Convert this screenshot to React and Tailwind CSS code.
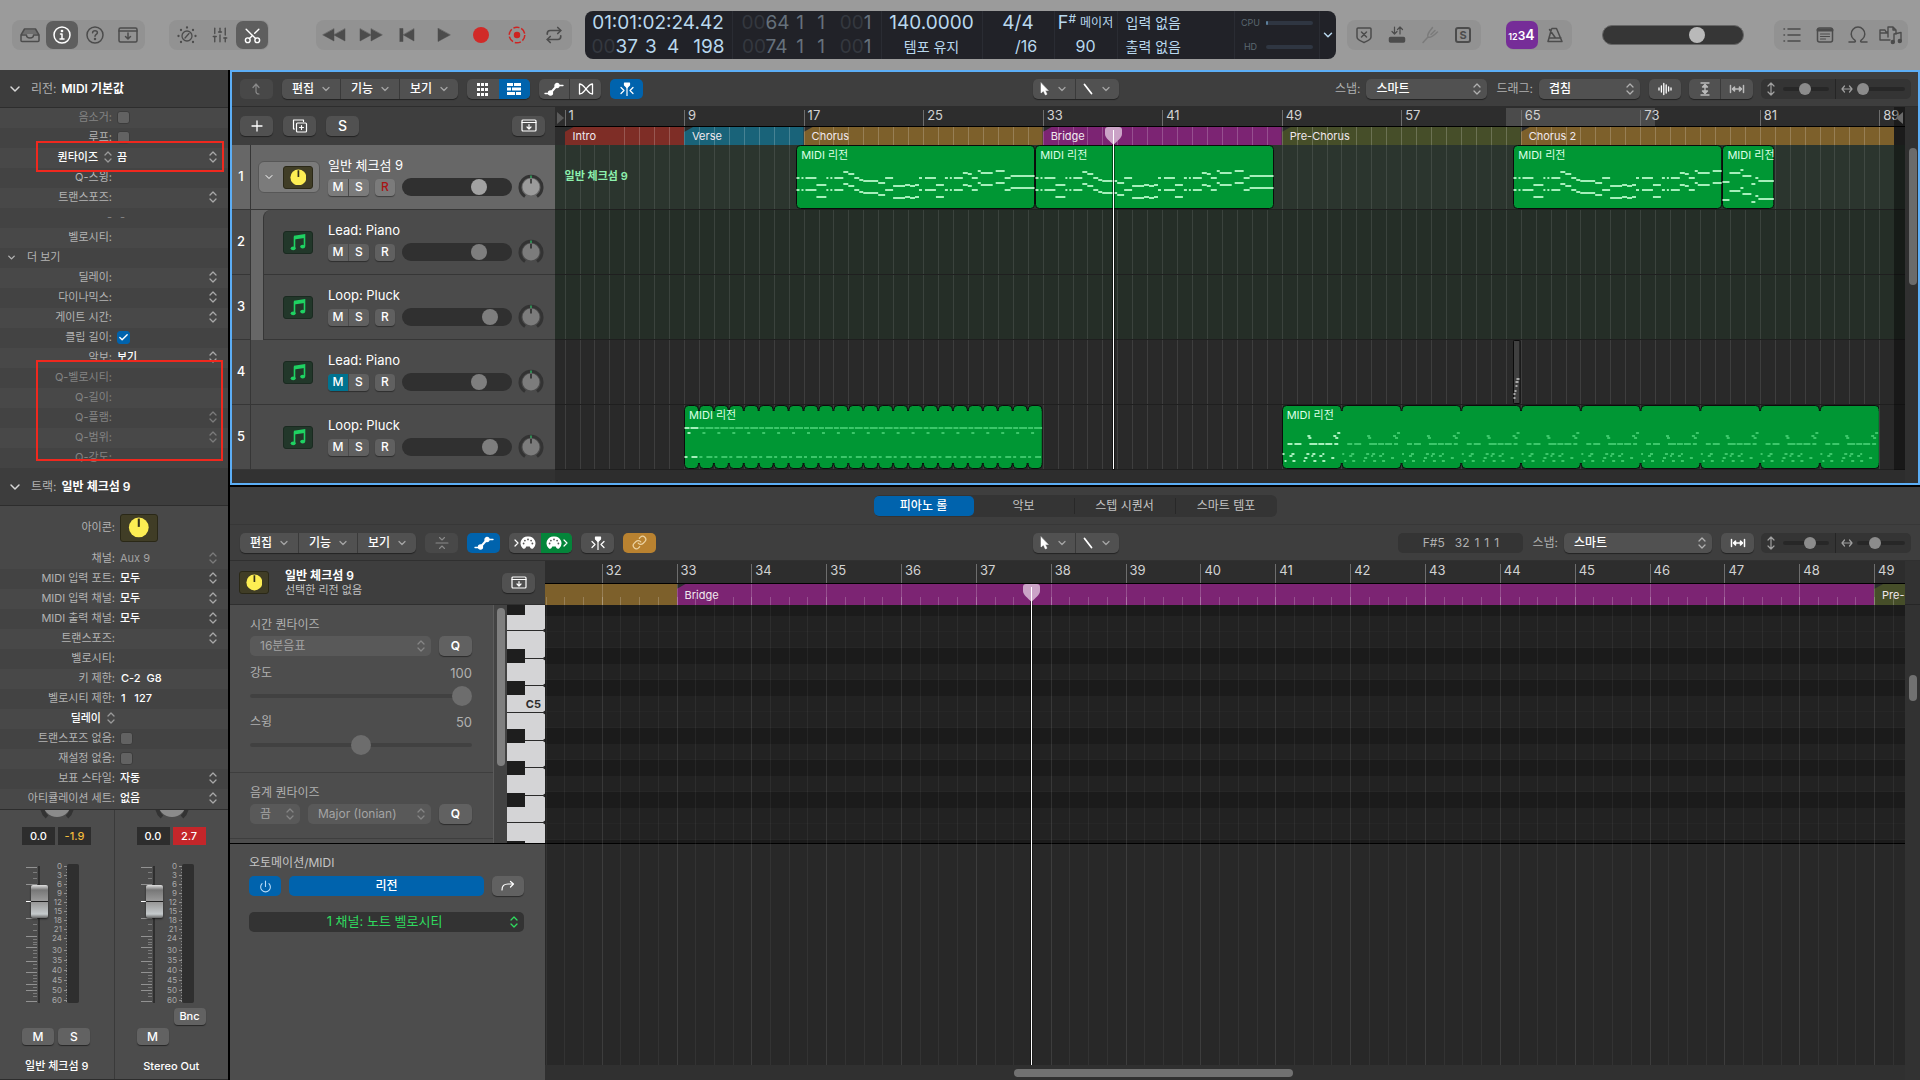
import { Check, ChevronDown, Link, Power, Repeat, Scissors, SlidersVertical } from "lucide-react";

const INSPECTOR_REGION = [
  { label: "음소거:", kind: "check", dim: true },
  { label: "루프:", kind: "check" },
  { label: "퀀타이즈", kind: "quantize", value: "끔" },
  { label: "Q-스윙:", kind: "text" },
  { label: "트랜스포즈:", kind: "select" },
  { label: "-", kind: "dash", dim: true },
  { label: "벨로시티:", kind: "text" },
  { label: "더 보기", kind: "toggle" },
  { label: "딜레이:", kind: "select" },
  { label: "다이나믹스:", kind: "select" },
  { label: "게이트 시간:", kind: "select" },
  { label: "클립 길이:", kind: "check", checked: true },
  { label: "악보:", kind: "select", value: "보기" },
  { label: "Q-벨로시티:", kind: "text", dim: true },
  { label: "Q-길이:", kind: "text", dim: true },
  { label: "Q-플램:", kind: "select", dim: true },
  { label: "Q-범위:", kind: "select", dim: true },
  { label: "Q-강도:", kind: "text", dim: true },
];

const INSPECTOR_TRACK = [
  { label: "채널:", kind: "select", value: "Aux 9", dimValue: true },
  { label: "MIDI 입력 포트:", kind: "select", value: "모두" },
  { label: "MIDI 입력 채널:", kind: "select", value: "모두" },
  { label: "MIDI 출력 채널:", kind: "select", value: "모두" },
  { label: "트랜스포즈:", kind: "select" },
  { label: "벨로시티:", kind: "text" },
  { label: "키 제한:", kind: "text", value: "C-2  G8" },
  { label: "벨로시티 제한:", kind: "text", value: "1   127" },
  { label: "딜레이", kind: "quantize" },
  { label: "트랜스포즈 없음:", kind: "check" },
  { label: "재설정 없음:", kind: "check" },
  { label: "보표 스타일:", kind: "select", value: "자동" },
  { label: "아티큘레이션 세트:", kind: "select", value: "없음" },
];

const TRACKS = [
  { id: 1, name: "일반 체크섬 9", volume: 73, selected: true },
  { id: 2, name: "Lead: Piano", volume: 73, nested: true },
  { id: 3, name: "Loop: Pluck", volume: 85, nested: true },
  { id: 4, name: "Lead: Piano", volume: 73, muted: true },
  { id: 5, name: "Loop: Pluck", volume: 85 },
];

const MARKERS = [
  { name: "Intro", from: 1, to: 9, color: "bg-[#7e2d26]" },
  { name: "Verse", from: 9, to: 17, color: "bg-[#196379]" },
  { name: "Chorus", from: 17, to: 33, color: "bg-[#7d602b]" },
  { name: "Bridge", from: 33, to: 49, color: "bg-[#7c2473]" },
  { name: "Pre-Chorus", from: 49, to: 65, color: "bg-[#464e29]" },
  { name: "Chorus 2", from: 65, to: 90, color: "bg-[#7d602b]" },
];

// notes are [start, end, y] in region units
const CHORUS = [
  [0, 3, 33], [5, 7, 33], [9, 20, 33], [20, 30, 40], [30, 32, 33], [34, 36, 33], [38, 47, 33],
  [47, 52, 27], [52, 58, 29], [58, 63, 33], [63, 67, 35], [67, 82, 36], [82, 89, 38], [89, 97, 33],
  [97, 109, 41], [109, 114, 40], [114, 119, 41], [119, 123, 40], [123, 126, 33], [129, 140, 33],
  [140, 148, 40], [149, 152, 33], [154, 156, 33], [158, 167, 33], [167, 172, 28], [172, 176, 29],
  [176, 182, 33], [182, 185, 26], [185, 197, 28], [200, 209, 26], [209, 215, 33], [215, 239, 31],
];
const TAIL = [
  [0, 7, 37], [7, 18, 28], [18, 21, 25], [20, 29, 31], [29, 33, 39], [33, 36, 33], [36, 53, 36],
];
const PLUCK = [[0, 5, 23], [6, 14, 23], [3, 6, 28], [0, 3, 52], [7, 13, 52]];
const ARP = [
  [5, 10, 39], [12, 19, 39], [27, 35, 39], [36, 42, 39], [43, 50, 39], [52, 56, 39],
  [25, 28, 31], [26, 29, 33], [51, 54, 31], [53, 56, 33], [55, 58, 28],
  [0, 2, 49], [9, 12, 49], [24, 27, 49], [30, 33, 49], [40, 42, 49],
  [7, 10, 51], [22, 25, 53], [29, 31, 51], [37, 40, 51], [49, 52, 53],
  [2, 4, 56], [10, 13, 56], [21, 23, 56], [31, 34, 56], [40, 43, 56],
];
const GRAY = [[3, 6, 39], [2, 5, 42], [2, 4, 46], [1, 3, 51], [0, 2, 54], [0, 2, 58]];

const double = (notes, gap) => notes.concat(notes.map(([a, b, y]) => [a, b, y + gap]));

const REGIONS = {
  1: [
    { from: 16.5, to: 32.5, notes: double(CHORUS, 12) },
    { from: 32.5, to: 48.5, notes: double(CHORUS, 12) },
    { from: 64.5, to: 78.5, notes: double(CHORUS, 12) },
    { from: 78.5, to: 82, notes: double(TAIL, 18) },
  ],
  4: [{ from: 64.5, to: 65, notes: GRAY, gray: true }],
  5: [
    { from: 9, to: 33, loop: 1, notes: PLUCK },
    { from: 49, to: 89, loop: 4, notes: ARP },
  ],
};

// horizontal scales: first visible bar and number of visible bars
const ARRANGE = { first: 0.36, span: 90.36 };
const ROLL = { first: 31.243, span: 18.17 };
const BAR = 15;
const PLAYHEAD = 37.74;

const at = (view, bar) => `${((bar - view.first) / view.span) * 100}%`;
const wide = (view, bars) => `${(bars / view.span) * 100}%`;
const range = (from, to, step = 1) => {
  const out = [];
  for (let n = from; n <= to; n += step) out.push(n);
  return out;
};

const BTN_BASE = "flex h-5 items-center justify-center rounded-[5px] text-white shadow-[0_1px_1px_rgba(0,0,0,0.45)]";
const BTN = `${BTN_BASE} bg-[#515151]`;
const BTN_LIGHT = `${BTN_BASE} bg-[#616161]`;
const THUMB = "appearance-none [&::-webkit-slider-thumb]:appearance-none [&::-webkit-slider-thumb]:rounded-full";

/* ---------- icons ---------- */

function Svg({ w = 20, h = 20, children, className = "", sw = 1.5 }) {
  return (
    <svg width={w} height={h} viewBox={`0 0 ${w} ${h}`} fill="none" stroke="currentColor" strokeWidth={sw} strokeLinecap="round" strokeLinejoin="round" className={`shrink-0 ${className}`} aria-hidden="true">
      {children}
    </svg>
  );
}

const TrayIcon = () => (
  <Svg><path d="M1 10 4.500 4h11L19 10v5.500a1 1 0 0 1-1 1H2a1 1 0 0 1-1-1ZM1 10h5.500c0 2 1.500 3 3.500 3s3.500-1 3.500-3H19" /><path d="M4.300 6h11.400M3.200 8h13.600" strokeWidth="1" /></Svg>
);
const InfoIcon = () => (
  <Svg><circle cx="10" cy="10" r="8" /><circle cx="10" cy="6" r="0.600" fill="currentColor" /><path d="M8.500 9H10v5M8 14h4" /></Svg>
);
const HelpIcon = () => (
  <Svg><circle cx="10" cy="10" r="8" /><path d="M7.600 7.800C7.700 6.400 8.700 5.700 10 5.700s2.400.8 2.400 2c0 1.700-2.400 1.700-2.400 3.500" /><circle cx="10" cy="14" r="0.500" fill="currentColor" /></Svg>
);
const DownBox = ({ small }) => (
  small
    ? <Svg w={16} h={14} sw={1.2}><rect x="1" y="1" width="14" height="11" rx="1" /><path d="M1 3.500h14M8 5.500v4M6 8l2 2 2-2" /></Svg>
    : <Svg><rect x="1" y="3" width="18" height="14" rx="1.500" /><path d="M1 6h18M10 8v6M7.500 11.500 10 14l2.500-2.500" /></Svg>
);
const DialIcon = () => (
  <Svg sw={1.3}>
    <circle cx="10" cy="11" r="5" /><path d="m8 13 4-4.500" />
    {[[10, 2.5], [4, 5], [16, 5], [1.5, 11], [18.5, 11], [4, 17], [16, 17]].map(([x, y]) => <circle key={`${x}-${y}`} cx={x} cy={y} r="0.500" fill="currentColor" />)}
  </Svg>
);
const UpDown = ({ className = "" }) => (
  <Svg w={8} h={12} sw={1.3} className={className}><path d="M1 4 4 1l3 3M1 8l3 3 3-3" /></Svg>
);
const CurveIcon = () => (
  <Svg w={20} h={14} sw={1.3}><path d="M1 11.500h5M13 3.500h6" /><path d="m6.500 11 6.500-7.500" strokeWidth="2" /><circle cx="6.500" cy="11" r="2" fill="currentColor" /><circle cx="13" cy="3.500" r="2" fill="currentColor" /></Svg>
);
const FlexIcon = () => (
  <Svg w={16} h={14} sw={1.3}><path d="M1.500 2v10c3 0 4-2 6.500-5s3.500-5 6.500-5v10c-3 0-4-2-6.500-5S4.500 2 1.500 2Z" /></Svg>
);
const CatchIcon = () => (
  <Svg w={18} h={14} sw={1.2}><path d="M9 4v10M3 5.500 6 8.500l-3 3M15 5.500l-3 3 3 3" /><path d="M6.500 1h5v2L9 5.500 6.500 3Z" fill="currentColor" /></Svg>
);
const PointerIcon = () => (
  <Svg w={10} h={14} sw={0.5}><path d="M2 1v10l2.500-2 1.800 4 1.700-.8L6.300 8.500H9Z" fill="currentColor" /></Svg>
);
const PencilIcon = () => <Svg w={10} h={12} sw={1.8}><path d="m1.500 1.500 7 9" /></Svg>;
const CopyPlus = () => (
  <Svg w={16} h={14} sw={1.2}><rect x="4.500" y="4" width="10" height="9" rx="1" /><path d="M2.500 10H1.500V1h10v1.500M9.500 6.500v4M7.500 8.500h4" /></Svg>
);
const WaveIcon = () => <Svg w={14} h={14} sw={1.3}><path d="M1 6v2M3.400 4v6M5.800 1.500v11M8.200 3v8M10.600 5v4M13 6v2" /></Svg>;
const FitV = () => (
  <Svg w={10} h={14} sw={1.4}><path d="M1 1h8M1 13h8M5 3v8" /><path d="M2.500 5 5 2.500 7.500 5ZM2.500 9 5 11.500 7.500 9Z" fill="currentColor" /></Svg>
);
const FitH = () => (
  <Svg w={16} h={10} sw={1.5}><path d="M1.500 1.500v7M14.500 1.500v7M4 5h8" /><path d="M5.500 3 3.500 5l2 2ZM10.500 3l2 2-2 2Z" fill="currentColor" /></Svg>
);
const ZoomV = () => <Svg w={8} h={14} sw={1.2}><path d="M4 1v12M1 4l3-3 3 3M1 10l3 3 3-3" /></Svg>;
const ZoomH = () => <Svg w={12} h={8} sw={1.2}><path d="M1 4h10M3.500 1 1 4l2.500 3M8.500 1 11 4 8.500 7" /></Svg>;
const PlugIcon = () => (
  <svg width="16" height="14" viewBox="0 0 16 14" aria-hidden="true">
    <path d="M8 .500a6.800 6.800 0 0 0-5.500 11.500c1 1.200 2.500 1 3 0l.8-1.500h3.400l.8 1.500c.5 1 2 1.200 3 0A6.800 6.800 0 0 0 8 .500Z" fill="#fff" />
    {[[3.6, 7.5], [4.9, 4.6], [8, 3.4], [11.1, 4.6], [12.4, 7.5]].map(([x, y]) => <circle key={x} cx={x} cy={y} r="0.900" fill="#555" />)}
  </svg>
);

/* ---------- small controls ---------- */

function KnobTile({ className = "" }) {
  return (
    <span className={`flex items-center justify-center rounded-[3px] border border-[#2a2817] bg-[#403d26] ${className}`}>
      <svg width="60%" height="80%" viewBox="0 0 20 20" aria-hidden="true">
        <circle cx="10" cy="10" r="9.500" fill="#fdee53" />
        <rect x="9" y="1.500" width="2" height="8" fill="#33311d" />
      </svg>
    </span>
  );
}

function NoteTile() {
  return (
    <span className="flex h-[23px] w-[30px] items-center justify-center rounded-[3px] border border-[#1a2a20] bg-[#22372a] text-[#1fd262]">
      <svg width="16" height="17" viewBox="0 0 16 17" aria-hidden="true">
        <path d="M4 2.500 14.500 1v11" fill="none" stroke="currentColor" strokeWidth="1.600" />
        <path d="M4 2.500 14.500 1v3L4 5.500Z" fill="currentColor" />
        <path d="M4.500 2.500V14" stroke="currentColor" strokeWidth="1.600" />
        <ellipse cx="3.200" cy="14.300" rx="2.500" ry="1.900" fill="currentColor" />
        <ellipse cx="12.700" cy="12.600" rx="2.500" ry="1.900" fill="currentColor" />
      </svg>
    </span>
  );
}

function PanKnob({ bright }) {
  return (
    <svg width="26" height="26" viewBox="0 0 26 26" aria-hidden="true">
      <path d="M7 22.500a11 11 0 1 1 12 0" fill="none" stroke="#333" strokeWidth="3" />
      <circle cx="13" cy="13" r="8.500" fill={bright ? "#9b9b9b" : "#7c7c7c"} />
      <path d="M13 5v4.500" stroke="#111" strokeWidth="1.200" />
      <path d="M13 1.500V4" stroke="#2fc66a" strokeWidth="1.200" />
    </svg>
  );
}

function MenuGroup() {
  return (
    <div className="flex h-5 overflow-hidden rounded-[5px] bg-[#515151] shadow-[0_1px_1px_rgba(0,0,0,0.45)]">
      {["편집", "기능", "보기"].map((name) => (
        <button key={name} className="flex w-[59px] items-center justify-between border-r border-[#3a3a3a] pr-2 pl-[10px] text-xs font-medium text-white last:w-[58px] last:border-r-0">
          {name}
          <ChevronDown size={12} strokeWidth={2.5} className="text-[#a5a5a5]" />
        </button>
      ))}
    </div>
  );
}

function ToolGroup() {
  return (
    <div className="flex h-5 overflow-hidden rounded-[5px] bg-[#515151] text-white shadow-[0_1px_1px_rgba(0,0,0,0.45)]">
      <button aria-label="포인터" className="flex w-[43px] items-center justify-center gap-[7px] border-r border-[#3a3a3a]">
        <PointerIcon /><ChevronDown size={12} strokeWidth={2.5} className="text-[#a5a5a5]" />
      </button>
      <button aria-label="연필" className="flex w-[43px] items-center justify-center gap-[7px]">
        <PencilIcon /><ChevronDown size={12} strokeWidth={2.5} className="text-[#a5a5a5]" />
      </button>
    </div>
  );
}

function PopUp({ label, value, className = "", selectClass = "bg-[#515151] text-xs text-white font-medium shadow-[0_1px_1px_rgba(0,0,0,0.45)]", arrow = "text-[#b0b0b0]" }) {
  return (
    <span className={`relative inline-block ${className}`}>
      <select aria-label={label} className={`block h-5 w-full appearance-none rounded-[5px] pl-[10px] ${selectClass}`}>
        <option>{value}</option>
      </select>
      <UpDown className={`pointer-events-none absolute top-1 right-[6px] ${arrow}`} />
    </span>
  );
}

function ZoomSliders({ v, h }) {
  const cls = `${THUMB} h-3 min-w-0 flex-1 bg-transparent [&::-webkit-slider-runnable-track]:h-1 [&::-webkit-slider-runnable-track]:rounded-full [&::-webkit-slider-runnable-track]:bg-[#272727] [&::-webkit-slider-thumb]:-mt-1 [&::-webkit-slider-thumb]:h-3 [&::-webkit-slider-thumb]:w-3 [&::-webkit-slider-thumb]:bg-[#8c8c8c]`;
  return (
    <div className="flex h-5 w-[150px] rounded-[5px] bg-[#343434] text-[#a0a0a0]">
      <div className="flex w-1/2 items-center gap-2 border-r border-[#252525] pr-[6px] pl-[6px]">
        <ZoomV /><input type="range" aria-label="세로 확대" defaultValue={v} className={cls} />
      </div>
      <div className="flex w-1/2 items-center gap-1 pr-[6px] pl-[5px]">
        <ZoomH /><input type="range" aria-label="가로 확대" defaultValue={h} className={cls} />
      </div>
    </div>
  );
}

/* ---------- top bar ---------- */

const BarGroup = ({ children, className = "" }) => (
  <div className={`flex h-[30px] items-center rounded-lg bg-[#929292] text-[#4c4c4c] ${className}`}>{children}</div>
);

function BarButton({ label, active, children, className = "w-8" }) {
  return (
    <button aria-label={label} className={`flex h-7 items-center justify-center rounded-[7px] ${className} ${active ? "bg-[#5e5e5e] text-white" : ""}`}>
      {children}
    </button>
  );
}

function LcdRow({ dim, a, b, c, d }) {
  return (
    <div className="grid grid-cols-[46px_1fr_1fr_34px] text-right leading-[23px]">
      <span><span className="text-[#34383f]">00</span>{a}</span>
      <span className="text-center">{b}</span>
      <span className="pr-2 text-center">{c}</span>
      <span>{dim && <span className="text-[#34383f]">00</span>}{d}</span>
    </div>
  );
}

function Lcd() {
  return (
    <div className="flex h-12 rounded-lg bg-[#212228] text-[19px] text-[#b9d8ee]">
      <div className="w-[148px] border-r border-[#2a2c33] pr-[7px] pl-[7px]">
        <div className="text-center leading-6 whitespace-nowrap">01:01:02:24.42</div>
        <LcdRow a="37" b="3" c="4" d="198" />
      </div>
      <div className="w-[149px] border-r border-[#2a2c33] pr-[9px] pl-[9px] text-[#66717c]">
        <div className="h-6"><LcdRow dim a="64" b="1" c="1" d="1" /></div>
        <LcdRow dim a="74" b="1" c="1" d="1" />
      </div>
      <div className="w-[101px] border-r border-[#2a2c33] text-center leading-6">
        <div>140.0000</div>
        <div className="text-sm leading-[23px]">템포 유지</div>
      </div>
      <div className="w-[72px] border-r border-[#2a2c33] text-center leading-6">
        <div>4/4</div>
        <div className="pl-4 text-base leading-[23px]">/16</div>
      </div>
      <div className="w-[63px] border-r border-[#2a2c33] text-center leading-6">
        <div className="flex items-center justify-center gap-1 text-lg leading-6">
          <span className="flex">F<span className="text-xs leading-4">#</span></span><span className="text-xs whitespace-nowrap">메이저</span>
        </div>
        <div className="text-base leading-[23px]">90</div>
      </div>
      <div className="w-[117px] border-r border-[#2a2c33] pl-2 text-sm leading-6">
        <div>입력 없음</div>
        <div className="leading-[23px]">출력 없음</div>
      </div>
      <div className="w-[85px] border-r border-[#2a2c33] pl-[6px] text-[9px] text-[#5b6770]">
        {[["CPU", "w-[2px]"], ["HD", "w-0"]].map(([name, fill]) => (
          <div key={name} className="flex h-6 items-center gap-[5px]">
            <span className="w-5 text-center">{name}</span>
            <span className="h-1 w-[47px] rounded-full bg-[#2f3642]"><span className={`block h-1 rounded-full bg-[#5b7f9c] ${fill}`} /></span>
          </div>
        ))}
      </div>
      <button aria-label="디스플레이 모드" className="flex w-4 items-center justify-center"><ChevronDown size={14} strokeWidth={2.5} /></button>
    </div>
  );
}

function TopBar() {
  return (
    <header className="flex h-[70px] items-start bg-[#9b9b9b] pt-[11px] pr-3 pl-3">
      <div className="flex h-12 flex-1 items-center">
        <BarGroup className="px-[1px]">
          <BarButton label="라이브러리" className="w-[33px]"><TrayIcon /></BarButton>
          <BarButton label="인스펙터" active><InfoIcon /></BarButton>
          <BarButton label="빠른 도움말" className="w-[33px]"><HelpIcon /></BarButton>
          <BarButton label="도구 막대" className="w-[33px]"><DownBox /></BarButton>
        </BarGroup>
        <BarGroup className="ml-6 px-[1px]">
          <BarButton label="스마트 컨트롤" className="w-[33px]"><DialIcon /></BarButton>
          <BarButton label="믹서" className="w-[33px]"><SlidersVertical size={18} strokeWidth={1.8} /></BarButton>
          <BarButton label="편집기" active><Scissors size={19} strokeWidth={1.8} className="-rotate-90" /></BarButton>
        </BarGroup>
        <BarGroup className="ml-[47px] w-[256px] justify-between px-[2px]">
          <BarButton label="되감기"><Svg w={24} h={14} sw={0.5}><path d="M12 1v12L1 7ZM23 1v12L12 7Z" fill="currentColor" /></Svg></BarButton>
          <BarButton label="빨리 감기"><Svg w={24} h={14} sw={0.5}><path d="M1 1v12l11-6ZM12 1v12l11-6Z" fill="currentColor" /></Svg></BarButton>
          <BarButton label="처음으로"><Svg w={16} h={14} sw={0.5}><path d="M1 .5h3v13H1ZM15 1v12L4.500 7Z" fill="currentColor" /></Svg></BarButton>
          <BarButton label="재생"><Svg w={14} h={14} sw={0.5}><path d="M1 .5v13L13 7Z" fill="currentColor" /></Svg></BarButton>
          <BarButton label="녹음"><span className="size-4 rounded-full bg-[#d12a28]" /></BarButton>
          <BarButton label="녹음 캡처">
            <Svg w={18} h={18} className="text-[#cf2321]"><circle cx="9" cy="9" r="7.800" strokeDasharray="6.200 2" strokeLinecap="butt" /><circle cx="9" cy="9" r="2.500" fill="currentColor" /></Svg>
          </BarButton>
          <BarButton label="사이클"><Repeat size={18} strokeWidth={2.2} /></BarButton>
        </BarGroup>
      </div>
      <Lcd />
      <div className="flex h-12 flex-1 items-center">
        <BarGroup className="ml-[11px] px-[1px]">
          <BarButton label="대치" className="w-[33px]"><Svg w={18} h={18}><path d="M2 3a1 1 0 0 1 1-1h12a1 1 0 0 1 1 1v8c0 3-4 4-7 5.500C6 15 2 14 2 11ZM6.500 6l5 5M11.500 6l-5 5" /></Svg></BarButton>
          <BarButton label="오토펀치" className="w-[33px]"><Svg w={18} h={18}><path d="M6.500 1v7M4 5.500 6.500 8 9 5.500M12 8V1M9.500 3.500 12 1l2.500 2.500" strokeWidth="1.200" /><rect x="1.500" y="11.500" width="15" height="4.500" rx="1" fill="currentColor" /></Svg></BarButton>
          <BarButton label="튜너" className="w-[33px] text-[#7b7b7b]"><Svg w={18} h={18}><path d="M2 16.500 7 11M7 11C5.500 8 9 5 11.500 1.500M7 11c3 1.500 6-2 9.500-5M10 8.500 14 4.500" /></Svg></BarButton>
          <BarButton label="솔로" className="w-[33px]"><span className="flex size-4 items-center justify-center rounded-[3px] border-2 border-current text-[11px] font-bold">S</span></BarButton>
        </BarGroup>
        <BarGroup className="ml-[25px]">
          <button className="flex h-7 w-8 items-baseline justify-center rounded-[7px] bg-[#762d98] font-semibold text-white">
            <span className="text-[9px] leading-7">12</span><span className="text-[12px] leading-7">3</span><span className="text-[14px] leading-7">4</span>
          </button>
          <BarButton label="메트로놈" className="w-[34px]"><Svg w={18} h={18}><path d="M6 2.500h4.500L16 15.500H2L5.500 3M3 12h12M9.500 12 3.500 3.500" /></Svg></BarButton>
        </BarGroup>
        <input type="range" aria-label="마스터 볼륨" defaultValue={70} className={`${THUMB} ml-[30px] h-5 w-[142px] rounded-full border border-[#666] bg-[#363636] [&::-webkit-slider-thumb]:size-4 [&::-webkit-slider-thumb]:bg-[#b9b9b9]`} />
        <BarGroup className="ml-auto px-[1px]">
          <BarButton label="목록 편집기" className="w-[33px]"><Svg w={18} h={16}><path d="M5 2h12M5 8h12M5 14h12M1 2h.5M1 8h.5M1 14h.5" /></Svg></BarButton>
          <BarButton label="메모장" className="w-[33px]"><Svg w={18} h={18}><rect x="1.500" y="2" width="15" height="14" rx="2" /><path d="M2 4h14" strokeWidth="3" /><path d="M4.500 8h9M4.500 10.500h9M4.500 13h5" strokeWidth="1.200" /></Svg></BarButton>
          <BarButton label="루프 브라우저" className="w-[33px]"><Svg w={20} h={18}><path d="M1 16h4.500c3 0 2-1.500 0-3a6.800 6.800 0 1 1 9 0c-2 1.500-3 3 0 3H19" /></Svg></BarButton>
          <BarButton label="미디어 브라우저" className="w-[33px]"><Svg w={24} h={20} sw={1.4}><path d="M11 15H1V5h5l1 2h2M1 8h7M9 12V2h5l3 3v4M14 2v3h3" /><path d="M15 17V9l7-1.500V16" /><circle cx="13.800" cy="17" r="1.500" fill="currentColor" /><circle cx="20.800" cy="16" r="1.500" fill="currentColor" /></Svg></BarButton>
        </BarGroup>
      </div>
    </header>
  );
}

/* ---------- inspector ---------- */

function InspectorRow({ row, id, labelWidth }) {
  const { label, kind, value = "", dim, dimValue, checked } = row;
  const tone = dim ? "text-[#848484]" : "text-[#b4b4b4]";

  if (kind === "toggle") {
    return (
      <button className="flex h-5 w-full items-center gap-[10px] pb-[2px] pl-[6px] text-[11px] text-[#b4b4b4] odd:bg-[#484848]">
        <ChevronDown size={11} strokeWidth={3} />{label}
      </button>
    );
  }
  if (kind === "dash") {
    return (
      <div className={`flex h-5 items-center pb-[2px] text-[11px] odd:bg-[#484848] ${tone}`}>
        <span className={`text-right ${labelWidth}`}>-</span><span className="pl-2">-</span>
      </div>
    );
  }
  return (
    <div className="flex h-5 items-center pb-[2px] text-[11px] odd:bg-[#484848]">
      <label htmlFor={id} className={`flex shrink-0 items-center justify-end gap-[6px] whitespace-nowrap ${labelWidth} ${kind === "quantize" ? "font-medium text-white" : tone}`}>
        {label}
        {kind === "quantize" && <UpDown className="text-[#9a9a9a]" />}
      </label>
      {kind === "check" && (
        <span className="relative ml-[5px] size-[13px]">
          <input id={id} type="checkbox" defaultChecked={checked} className="block size-[13px] appearance-none rounded-[3px] border border-[#3c3c3c] bg-[#626262] checked:border-[#0063ad] checked:bg-[#0063ad]" />
          {checked && <Check size={11} strokeWidth={3} className="pointer-events-none absolute top-[1px] left-[1px] text-white" />}
        </span>
      )}
      {kind === "text" && (
        <input id={id} type="text" defaultValue={value} className="ml-[6px] w-20 bg-transparent font-medium text-white" />
      )}
      {(kind === "select" || kind === "quantize") && (
        <span className="relative ml-[5px] mr-[11px] flex-1">
          <select id={id} className={`block h-[18px] w-full appearance-none bg-transparent ${dimValue ? "text-[#a2a2a2]" : "font-medium text-white"}`}>
            <option>{value}</option>
          </select>
          {(kind === "select" || value) && <UpDown className={`pointer-events-none absolute top-[3px] right-0 ${dim || dimValue ? "text-[#7b7b7b]" : "text-[#a8a8a8]"}`} />}
        </span>
      )}
    </div>
  );
}

function SectionHead({ title, name }) {
  return (
    <h2 className="flex h-[38px] items-center border-b border-[#2d2d2d] bg-[#3d3d3d] pt-[1px] pl-[7px] text-xs text-[#b0b0b0]">
      <ChevronDown size={16} strokeWidth={2.2} className="mr-2 text-[#d8d8d8]" />
      {title}<span className="ml-[5px] font-semibold text-white">{name}</span>
    </h2>
  );
}

const SCALE = [[0, 4], [3, 13], [6, 22], [9, 31], [12, 40], [15, 49], [18, 58], [21, 67], [24, 76], [30, 88], [35, 98], [40, 108], [45, 118], [50, 128], [60, 138]];
const LONG_TICKS = [5, 22, 56, 74, 85, 99, 110, 122, 128, 139];
const SHORT_TICKS = [10, 16, 28, 33, 45, 50, 62, 68, 77, 80, 82, 88, 91, 95, 102, 106, 113, 116, 119, 125, 131, 134];

function ChannelStrip({ name, peak, peakClass, bounce }) {
  return (
    <div className="flex flex-1 flex-col border-r border-[#3a3a3a] pl-[22px] last:border-r-0">
      <div className="h-[17px] overflow-hidden pl-[17px]">
        <svg width="36" height="12" viewBox="0 0 36 12" aria-hidden="true">
          <path d="M3-4a15 15 0 0 0 5 11M33-4a15 15 0 0 1-5 11" fill="none" stroke="#333" strokeWidth="4" />
          <circle cx="18" cy="-7" r="14" fill="#8b8b8b" />
        </svg>
      </div>
      <div className="flex gap-[3px] text-center text-[11px] leading-[18px] font-medium text-white">
        <span className="w-[33px] bg-[#2d2d2d]">0.0</span>
        <span className={`w-[33px] ${peakClass}`}>{peak}</span>
      </div>
      <div className="relative mt-[17px] h-[142px] w-[70px]">
        <svg width="70" height="142" viewBox="0 0 70 142" aria-hidden="true">
          {LONG_TICKS.map((y) => <rect key={y} x="4" y={y} width="11" height="1" fill="#929292" />)}
          {SHORT_TICKS.map((y) => <rect key={y} x="11" y={y} width="4" height="1" fill="#7c7c7c" />)}
          <rect x="4" y="39" width="6" height="1" fill="#fff" />
          <rect x="16" y="4" width="2" height="137" fill="#2f2f2f" />
          {SCALE.map(([n, y]) => (
            <g key={n}>
              <text x="40" y={y + 3} textAnchor="end" fontSize="8" fill="#a8a8a8">{n}</text>
              <rect x="42" y={y} width="3" height="1" fill="#929292" />
            </g>
          ))}
          <path d="M44.500 4v136" stroke="#8b8b8b" strokeDasharray="1 2" />
          <rect x="45" y="2" width="12" height="139" rx="2" fill="#2f2f2f" />
        </svg>
        <input
          type="range"
          aria-label={`${name} 볼륨`}
          defaultValue={82}
          className="absolute top-1 left-[9px] h-[137px] w-[17px] appearance-none bg-transparent [direction:rtl] [writing-mode:vertical-lr] [&::-webkit-slider-thumb]:h-[33px] [&::-webkit-slider-thumb]:w-[17px] [&::-webkit-slider-thumb]:appearance-none [&::-webkit-slider-thumb]:rounded-[2px] [&::-webkit-slider-thumb]:bg-[linear-gradient(#e0e0e0,#777_15%,#999_47%,#222_48%,#222_52%,#999_53%,#c5cacc_88%,#666)] [&::-webkit-slider-thumb]:shadow-[0_1px_2px_rgba(0,0,0,0.6)]"
        />
      </div>
      <div className="mt-1 mb-[3px] flex h-[17px] pl-[37px]">
        {bounce && <button className="h-[17px] w-8 rounded bg-[#626262] text-[11px] leading-[17px] font-medium text-white shadow-[0_1px_1px_rgba(0,0,0,0.5)]">Bnc</button>}
      </div>
      <div className="flex gap-1 text-xs font-medium text-white">
        <button className="h-[17px] w-8 rounded bg-[#626262] leading-[17px] shadow-[0_1px_1px_rgba(0,0,0,0.5)]">M</button>
        {!bounce && <button className="h-[17px] w-8 rounded bg-[#626262] leading-[17px] shadow-[0_1px_1px_rgba(0,0,0,0.5)]">S</button>}
      </div>
      <div className="mt-3 -ml-[22px] text-center text-[11px] leading-[18px] font-medium text-white">{name}</div>
    </div>
  );
}

function Inspector() {
  return (
    <aside className="flex w-[230px] shrink-0 flex-col border-r-2 border-black bg-[#434343]">
      <SectionHead title="리전:" name="MIDI 기본값" />
      <div className="relative">
        {INSPECTOR_REGION.map((row, i) => <InspectorRow key={i} row={row} id={`region-${i}`} labelWidth="w-[112px]" />)}
        <div className="pointer-events-none absolute top-[33px] right-1 left-9 h-[31px] border-2 border-[#f0281e]" />
        <div className="pointer-events-none absolute top-[252px] right-[5px] left-9 h-[101px] border-2 border-[#f0281e]" />
      </div>
      <SectionHead title="트랙:" name="일반 체크섬 9" />
      <div className="flex h-[43px] items-center bg-[#484848] text-[11px] text-[#b4b4b4]">
        <span className="w-[115px] text-right">아이콘:</span>
        <KnobTile className="ml-[5px] h-7 w-[38px]" />
      </div>
      <div>
        {INSPECTOR_TRACK.map((row, i) => <InspectorRow key={i} row={row} id={`track-${i}`} labelWidth="w-[115px]" />)}
      </div>
      <div className="flex flex-1 border-t border-b border-[#2d2d2d] bg-[#4c4c4c]">
        <ChannelStrip name="일반 체크섬 9" peak="-1.9" peakClass="bg-[#2d2d2d] text-[#f0bb3c]" />
        <ChannelStrip name="Stereo Out" peak="2.7" peakClass="bg-[#c4262a]" bounce />
      </div>
    </aside>
  );
}

/* ---------- arrange window ---------- */

function TrackHeader({ track }) {
  const { id, name, volume, selected, nested, muted } = track;
  const small = selected ? "bg-[#7b7b7b]" : "bg-[#606060]";
  return (
    <div className={`flex h-[65px] ${selected || nested ? "bg-[#676767]" : "bg-[#4b4b4b]"}`}>
      <div className={`flex w-[19px] items-center justify-center border-r border-b border-[#363636] text-[13px] font-medium text-white ${selected ? "" : "bg-[#4b4b4b]"}`}>{id}</div>
      <div className={`flex flex-1 ${selected ? "border-b border-[#363636] pl-[7px]" : nested ? `ml-3 border-b border-l border-[#363636] bg-[#4b4b4b] pl-[19px] ${id === 2 ? "rounded-tl-lg" : ""}` : "border-b border-[#363636] pl-8"}`}>
        {selected ? (
          <div className="mt-4 mr-2 flex h-8 w-[62px] items-center justify-between rounded-md border border-[#575757] bg-[#7b7b7b] pr-[6px] pl-1">
            <ChevronDown size={12} className="text-white" />
            <KnobTile className="h-[23px] w-[30px]" />
          </div>
        ) : (
          <div className="mt-[21px] mr-[15px] h-[23px]"><NoteTile /></div>
        )}
        <div className="pt-[11px]">
          <div className="text-[13px] leading-[18px] text-white">{name}</div>
          <div className="mt-1 flex h-[18px] items-center text-xs font-medium text-white">
            <div className={`flex h-[17px] overflow-hidden rounded-[4px] shadow-[0_1px_1px_rgba(0,0,0,0.4)] ${small}`}>
              <button className={`w-[21px] border-r border-[#4a4a4a] ${muted ? "bg-[#007390]" : ""}`}>M</button>
              <button className="w-5">S</button>
            </div>
            <button className={`ml-[6px] h-[17px] w-5 rounded-[4px] shadow-[0_1px_1px_rgba(0,0,0,0.4)] ${small} ${selected ? "text-[#a81414]" : ""}`}>R</button>
            <input type="range" aria-label={`${name} 볼륨`} defaultValue={volume} className={`${THUMB} ml-[7px] h-[18px] w-[110px] rounded-full bg-[#303030] [&::-webkit-slider-thumb]:size-4 ${selected ? "[&::-webkit-slider-thumb]:bg-[#a2a2a2]" : "[&::-webkit-slider-thumb]:bg-[#7e7e7e]"}`} />
            <span className="ml-[6px] h-[26px]"><PanKnob bright={selected} /></span>
          </div>
        </div>
      </div>
    </div>
  );
}

function Region({ region }) {
  const { from, to, notes, loop, gray } = region;
  const width = (to - from) * BAR;
  const step = loop ? loop * BAR : width;
  const loops = range(0, Math.round(width / step) - 1);
  const fill = gray ? "#404040" : "#009734";
  return (
    <div className="absolute inset-y-0 overflow-hidden" style={{ left: at(ARRANGE, from), width: wide(ARRANGE, to - from) }}>
      <svg width="100%" height="64" viewBox={`0 0 ${width} 64`} preserveAspectRatio="none" className="block" aria-hidden="true">
        {loops.map((n) => <rect key={n} x={n * step + 0.5} y="0.5" width={step - 1} height="63" rx={gray ? 1 : 4} fill={fill} stroke="#0b0b0b" />)}
        {loop && <rect x="1.500" y="6" width={width - 2.5} height="52" fill={fill} />}
        {loops.map((n) => notes.filter(([a]) => a < width).map(([a, b, y], i) => (
          <rect key={`${n}-${i}`} x={n * step + a + 0.5} y={y - 1} width={Math.min(b, width - 1) - a} height="2" fill={gray ? "#a9a9a9" : n === 0 ? "#a6efbb" : "#3cc76a"} />
        )))}
      </svg>
      {!gray && <span className="absolute top-[2px] left-[5px] text-[11px] leading-4 whitespace-nowrap text-[#dcffe6]">MIDI 리전</span>}
    </div>
  );
}

function BarLines({ view, bars, className }) {
  return bars.map((bar) => <span key={bar} className={`absolute w-px ${className}`} style={{ left: at(view, bar) }} />);
}

function Markers({ view, markers, sub }) {
  return markers.map((m) => (
    <div
      key={m.name}
      className={`absolute inset-y-0 overflow-hidden pl-2 text-[11px] text-[#f0e8ee] [clip-path:polygon(0_5px,9px_0,100%_0,100%_100%,0_100%)] ${m.color} ${sub ? "leading-[23px]" : "leading-[19px]"}`}
      style={{ left: at(view, m.from), width: wide(view, m.to - m.from) }}
    >
      {m.label ?? m.name}
    </div>
  ));
}

function Playhead({ view }) {
  return (
    <div className="pointer-events-none absolute inset-y-0 w-px bg-white outline outline-black/50" style={{ left: at(view, PLAYHEAD) }}>
      <svg width="17" height="18" viewBox="0 0 17 18" className="absolute top-0 -left-2" aria-hidden="true">
        <path d="M0 3a3 3 0 0 1 3-3h11a3 3 0 0 1 3 3v4c0 4-5 7-8.500 11C5 14 0 11 0 7Z" fill="#cba3c7" />
        <path d="M8.500 3v15" stroke="#fff" />
      </svg>
    </div>
  );
}

function Timeline() {
  return (
    <div className="relative flex-1 overflow-hidden bg-[#2d2d2d]">
      <div className="relative h-5 border-b border-black">
        <div className="absolute top-px bottom-0 bg-[#4b4b4b]" style={{ left: at(ARRANGE, 64), width: wide(ARRANGE, 10) }} />
        <Svg w={7} h={14} sw={0} className="absolute top-1 left-[2px] text-[#5a5a5a]"><path d="M0 1 7 7 0 13Z" fill="currentColor" /></Svg>
        {range(1, 89, 8).map((bar) => (
          <span key={bar} className="absolute top-[3px] bottom-0 border-l border-[#6d6d6d] pl-[3px] text-[13px] leading-[10px] text-[#d2d2d2]" style={{ left: at(ARRANGE, bar) }}>{bar}</span>
        ))}
      </div>
      <div className="relative h-[18px]">
        <Markers view={ARRANGE} markers={MARKERS} />
        <BarLines view={ARRANGE} bars={range(5, 89)} className="inset-y-0 bg-white/20" />
      </div>
      {TRACKS.map(({ id }) => (
        <div key={id} className={`relative h-[65px] border-b border-[#1f1f1f] ${id === 1 ? "bg-[#2b352e]" : id < 4 ? "bg-[#252e27]" : "bg-[#292929]"}`}>
          <BarLines view={ARRANGE} bars={range(1, 89)} className="inset-y-0 bg-white/10" />
          {id === 1 && <span className="absolute top-[22px] text-[11px] leading-[18px] font-semibold text-[#8df0ad]" style={{ left: at(ARRANGE, 1) }}>일반 체크섬 9</span>}
          {(REGIONS[id] || []).map((region) => <Region key={region.from} region={region} />)}
        </div>
      ))}
      <div className="absolute top-0 right-0 bottom-[13px] w-[11px] bg-black/40">
        <Svg w={7} h={14} sw={0} className="absolute top-1 right-[2px] text-[#6a6a6a]"><path d="M7 1 0 7l7 6Z" fill="currentColor" /></Svg>
      </div>
      <div className="absolute inset-x-0 top-5 bottom-[14px]"><Playhead view={ARRANGE} /></div>
    </div>
  );
}

function ArrangeWindow() {
  return (
    <section className="flex flex-col border-2 border-[#5caef6] bg-[#323232]">
      <div className="flex h-[35px] items-center border-b border-[#2d2d2d] bg-[#3e3e3e] pr-[7px] pl-2">
        <div className="flex flex-1 items-center">
          <button aria-label="위로" className="flex h-5 w-[33px] items-center justify-center rounded-[5px] bg-[#484848] text-[#8a8a8a]"><Svg w={10} h={12} sw={1.2}><path d="M1 4.500 4 1l3 3.500M4 1v7.500c0 1.500 1 2.500 3 2.500" /></Svg></button>
          <div className="ml-[9px]"><MenuGroup /></div>
          <div className={`ml-[9px] overflow-hidden ${BTN}`}>
            <button aria-label="격자" className="flex h-5 w-8 items-center justify-center pr-[2px]">
              <Svg w={13} h={13} sw={0}>{[0, 5, 10].map((y) => [0, 4, 8].map((x) => <rect key={`${x}${y}`} x={x + 1} y={y} width="3" height="3" fill="currentColor" />))}</Svg>
            </button>
            <button aria-label="트랙" className="flex h-5 w-[31px] items-center justify-center bg-[#0063ad] pr-[2px]">
              <Svg w={14} h={12} sw={0}><path d="M0 0h6v3H0ZM7 0h7v3H7ZM0 4.500h4v3H0ZM5 4.500h9v3H5ZM0 9h8v3H0ZM9 9h5v3H9Z" fill="currentColor" /></Svg>
            </button>
          </div>
          <div className={`ml-[9px] overflow-hidden ${BTN}`}>
            <button aria-label="오토메이션" className="flex h-5 w-[31px] items-center justify-center border-r border-[#3a3a3a]"><CurveIcon /></button>
            <button aria-label="Flex" className="flex h-5 w-[31px] items-center justify-center"><FlexIcon /></button>
          </div>
          <button aria-label="재생헤드 따라가기" className="ml-[9px] flex h-5 w-[33px] items-center justify-center rounded-[5px] bg-[#0063ad] text-white"><CatchIcon /></button>
        </div>
        <ToolGroup />
        <div className="flex flex-1 items-center justify-end text-xs text-[#b0b0b0]">
          <span className="mr-[6px]">스냅:</span>
          <PopUp label="스냅" value="스마트" className="w-[121px]" />
          <span className="mr-[6px] ml-[9px]">드래그:</span>
          <PopUp label="드래그" value="겹침" className="w-[101px]" />
          <button aria-label="파형 확대" className={`ml-[9px] w-8 ${BTN}`}><WaveIcon /></button>
          <div className={`ml-2 overflow-hidden ${BTN}`}>
            <button aria-label="세로 맞춤" className="flex h-5 w-8 items-center justify-center border-r border-[#3a3a3a] text-[#bbb]"><FitV /></button>
            <button aria-label="가로 맞춤" className="flex h-5 w-8 items-center justify-center text-[#bbb]"><FitH /></button>
          </div>
          <div className="ml-2"><ZoomSliders v={48} h={0} /></div>
        </div>
      </div>
      <div className="flex">
        <div className="w-[323px] shrink-0">
          <div className="flex h-[38px] items-center gap-[10px] bg-[#3e3e3e] pr-[10px] pl-2">
            <button aria-label="트랙 추가" className={`w-[33px] ${BTN}`}><Svg w={12} h={12} sw={1.3}><path d="M6 1v10M1 6h10" /></Svg></button>
            <button aria-label="트랙 복제" className={`w-[33px] ${BTN}`}><CopyPlus /></button>
            <button className={`w-[33px] text-sm font-medium ${BTN}`}>S</button>
            <button aria-label="트랙 헤더 구성" className={`ml-auto w-[33px] ${BTN}`}><DownBox small /></button>
          </div>
          {TRACKS.map((track) => <TrackHeader key={track.id} track={track} />)}
          <div className="h-[13px]" />
        </div>
        <Timeline />
        <div className="w-[13px] shrink-0 bg-[#303030] pt-[41px] pl-1">
          <div className="h-[137px] w-2 rounded-full bg-[#6b6b6b]" />
        </div>
      </div>
    </section>
  );
}

/* ---------- piano roll ---------- */

const KEY_LINES = [25, 53, 80, 107, 135, 162, 190, 217];
const BLACK_KEYS = [[0, 10], [44, 14], [76, 14], [124, 14], [156, 14], [188, 14], [236, 2]];
const LANES = "BWWBWBWWBWBWBWWB".split("");

function Keyboard() {
  return (
    <svg width="38" height="238" viewBox="0 0 38 238" className="shrink-0" aria-hidden="true">
      <rect width="38" height="238" fill="#d4d4d6" />
      {KEY_LINES.map((y) => <path key={y} d={`M0 ${y}.5h36l2-1.500v3l-2-1.500`} stroke="#2a2a2a" fill="#2a2a2a" />)}
      {BLACK_KEYS.map(([y, h]) => <rect key={y} y={y} width="18" height={h} fill="#1e1e1e" />)}
      <text x="34" y="103" textAnchor="end" fontSize="11" fontWeight="700" fill="#2b2b2b">C5</text>
    </svg>
  );
}

function FlatSlider({ id, label, value, position }) {
  return (
    <div className="mb-[6px]">
      <div className="flex h-[18px] justify-between text-[13px] leading-[18px] text-[#b0b0b0]">
        <label htmlFor={id} className="text-xs leading-[18px]">{label}</label><span>{value}</span>
      </div>
      <input
        id={id}
        type="range"
        defaultValue={position}
        className={`${THUMB} mt-[3px] block h-[22px] w-full bg-transparent [&::-webkit-slider-runnable-track]:h-1 [&::-webkit-slider-runnable-track]:rounded-full [&::-webkit-slider-runnable-track]:bg-[#414141] [&::-webkit-slider-thumb]:-mt-2 [&::-webkit-slider-thumb]:size-5 [&::-webkit-slider-thumb]:bg-[#6d6d6d]`}
      />
    </div>
  );
}

const FLAT = "bg-[#595959] text-xs text-[#a4a4a4]";

function QuantizePanel() {
  return (
    <div className="flex-1 overflow-hidden bg-[#4d4d4d]">
      <div className="h-[167px] pt-[11px] pr-[21px] pl-5">
        <div className="text-xs leading-[18px] text-[#b0b0b0]">시간 퀀타이즈</div>
        <div className="mt-[2px] mb-2 flex gap-2">
          <PopUp label="시간 퀀타이즈" value="16분음표" className="flex-1" selectClass={FLAT} arrow="text-[#858585]" />
          <button className={`w-[33px] text-xs font-semibold ${BTN_LIGHT}`}>Q</button>
        </div>
        <FlatSlider id="strength" label="강도" value="100" position={100} />
        <FlatSlider id="swing" label="스윙" value="50" position={50} />
      </div>
      <div className="h-[67px] border-t border-b border-[#3e3e3e] pt-[11px] pr-[21px] pl-5">
        <div className="text-xs leading-[18px] text-[#b0b0b0]">음계 퀀타이즈</div>
        <div className="mt-[2px] flex gap-2">
          <PopUp label="음계 퀀타이즈" value="끔" className="w-[50px]" selectClass={FLAT} arrow="text-[#858585]" />
          <PopUp label="음계" value="Major (Ionian)" className="flex-1" selectClass={FLAT} arrow="text-[#858585]" />
          <button className={`w-[33px] text-xs font-semibold ${BTN_LIGHT}`}>Q</button>
        </div>
      </div>
    </div>
  );
}

function RollGrid() {
  return (
    <div className="relative flex flex-1 flex-col overflow-hidden bg-[#282828]">
      <div className="relative h-[23px] border-b border-black bg-[#2d2d2d]">
        {range(32, 49).map((bar) => (
          <span key={bar} className="absolute top-[3px] bottom-0 border-l border-[#6d6d6d] pl-[3px] text-[13px] leading-3 text-[#d2d2d2]" style={{ left: at(ROLL, bar) }}>{bar}</span>
        ))}
      </div>
      <div className="relative h-[21px] bg-[#2d2d2d]">
        <div className="absolute inset-y-0 left-0 bg-[#7d602b]" style={{ width: at(ROLL, 33) }} />
        <Markers sub view={ROLL} markers={[{ ...MARKERS[3] }, { ...MARKERS[4], label: "Pre-" }]} />
        <BarLines view={ROLL} bars={range(31.25, 49.25, 0.25)} className="top-[13px] bottom-0 bg-white/20" />
        <BarLines view={ROLL} bars={range(32, 49)} className="inset-y-0 bg-white/20" />
      </div>
      <div className="h-[238px] overflow-hidden">
        {LANES.map((lane, i) => (
          <div key={i} className={`${i === 0 ? "h-[11px]" : "h-4"} ${lane === "B" ? "bg-[#1b1b1b]" : "border-b border-[#262626] bg-[#222]"}`} />
        ))}
      </div>
      <div className="flex-1 border-t border-black" />
      <div className="relative z-10 flex h-[15px] bg-[#303030] pt-1">
        <div className="w-[34.5%]" />
        <div className="h-2 w-[20.5%] rounded-full bg-[#717171]" />
      </div>
      <div className="absolute inset-x-0 top-11 bottom-[15px]">
        <BarLines view={ROLL} bars={range(31.25, 49.25, 0.25)} className="inset-y-0 bg-white/5" />
        <BarLines view={ROLL} bars={range(32, 49)} className="inset-y-0 bg-white/5" />
      </div>
      <div className="absolute inset-x-0 top-[23px] bottom-[15px]"><Playhead view={ROLL} /></div>
    </div>
  );
}

function PianoRoll() {
  return (
    <section className="flex flex-1 flex-col border-t-2 border-black bg-[#3e3e3e]">
      <div className="flex h-[38px] items-center justify-center border-b border-[#373737]">
        <div role="tablist" className="flex h-[22px] items-center rounded-[6px] bg-[#343434] text-xs text-[#c4c4c4]">
          <button role="tab" aria-selected="true" className="h-5 w-[100px] rounded-[5px] bg-[#0063ad] font-medium text-white">피아노 롤</button>
          <button role="tab" className="h-4 w-[101px] border-r border-[#282828]">악보</button>
          <button role="tab" className="h-4 w-[101px] border-r border-[#282828]">스텝 시퀀서</button>
          <button role="tab" className="h-4 w-[101px]">스마트 템포</button>
        </div>
      </div>
      <div className="flex h-[36px] items-center border-b border-[#303030] pr-[9px] pl-[10px]">
        <div className="flex flex-1 items-center gap-[9px]">
          <MenuGroup />
          <button aria-label="접기" className="flex h-5 w-[33px] items-center justify-center rounded-[5px] bg-[#484848] text-[#8a8a8a]"><Svg w={14} h={14} sw={1.1}><path d="M1 7h12M4.500 1.500 7 4l2.500-2.500M4.500 12.500 7 10l2.500 2.500" /></Svg></button>
          <button aria-label="오토메이션 보기" className="flex h-5 w-[33px] items-center justify-center rounded-[5px] bg-[#0063ad] text-white"><CurveIcon /></button>
          <div className={`overflow-hidden ${BTN}`}>
            <button aria-label="MIDI 입력" className="flex h-5 w-8 items-center justify-center gap-[1px]"><Svg w={5} h={8} sw={1.2}><path d="m1 1 3 3-3 3" /></Svg><PlugIcon /></button>
            <button aria-label="MIDI 출력" className="flex h-5 w-[31px] items-center justify-center gap-[1px] bg-[#04853a]"><PlugIcon /><Svg w={5} h={8} sw={1.2}><path d="m1 1 3 3-3 3" /></Svg></button>
          </div>
          <button aria-label="재생헤드 따라가기" className={`w-[33px] ${BTN}`}><CatchIcon /></button>
          <button aria-label="링크" className="flex h-5 w-[33px] items-center justify-center rounded-[5px] bg-[#b98230] text-[#ecd3a2]"><Link size={15} /></button>
        </div>
        <ToolGroup />
        <div className="flex flex-1 items-center justify-end text-xs text-[#b0b0b0]">
          <div className="flex h-5 w-[125px] items-center justify-center gap-[10px] rounded-[5px] bg-[#343434]">
            <span>F#5</span>
            <span className="flex gap-[5px]"><span>32</span><span>1</span><span>1</span><span>1</span></span>
          </div>
          <span className="mr-[6px] ml-[9px]">스냅:</span>
          <PopUp label="피아노 롤 스냅" value="스마트" className="w-[148px]" />
          <button aria-label="가로 맞춤" className={`mr-[7px] ml-[9px] w-[33px] ${BTN}`}><FitH /></button>
          <ZoomSliders v={62} h={34} />
        </div>
      </div>
      <div className="flex flex-1">
        <div className="flex w-[315px] shrink-0 flex-col">
          <div className="flex h-11 items-center border-b border-[#2f2f2f] pr-[10px] pl-[9px]">
            <KnobTile className="h-[23px] w-[30px]" />
            <div className="ml-4 flex-1 text-white">
              <div className="text-xs leading-[14px] font-semibold">일반 체크섬 9</div>
              <div className="text-[11px] leading-[14px] text-[#c2c2c2]">선택한 리전 없음</div>
            </div>
            <button aria-label="헤더 구성" className={`w-[33px] ${BTN}`}><DownBox small /></button>
          </div>
          <div className="flex h-[238px]">
            <QuantizePanel />
            <div className="w-[14px] shrink-0 border-l border-[#5c5c5c] bg-[#434343] pt-[3px] pl-[3px]"><div className="h-[158px] w-2 rounded-full bg-[#7f7f7f]" /></div>
            <Keyboard />
          </div>
          <div className="flex-1 border-t border-black bg-[#4d4d4d] pt-[10px] pr-[21px] pl-[19px]">
            <div className="text-xs leading-[18px] text-[#c4c4c4]">오토메이션/MIDI</div>
            <div className="mt-1 flex gap-2">
              <button aria-label="켜기" className="flex h-5 w-8 items-center justify-center rounded-[5px] bg-[#0063ad] text-[#b9dcf8]"><Power size={13} /></button>
              <button className="h-5 flex-1 rounded-[5px] bg-[#0063ad] text-xs font-medium text-white">리전</button>
              <button aria-label="다음" className={`w-8 ${BTN_LIGHT}`}><Svg w={14} h={12} sw={1.2}><path d="M1 10c0-4 2-6 6-6h5M9.500 1.500 12.500 4 9.500 7" /></Svg></button>
            </div>
            <PopUp
              label="오토메이션 파라미터"
              value="1 채널: 노트 벨로시티"
              className="mt-4 w-full"
              selectClass="bg-[#333] pr-[14px] text-center text-[13px] text-[#2fdc5f]"
              arrow="text-[#2fdc5f]"
            />
          </div>
        </div>
        <RollGrid />
        <div className="flex w-[15px] shrink-0 flex-col bg-[#323232]">
          <div className="h-11 border-b border-[#262626]" />
          <div className="mt-[70px] ml-1 h-[26px] w-2 rounded-full bg-[#717171]" />
        </div>
      </div>
    </section>
  );
}

export default function App() {
  return (
    <div className="flex min-h-screen flex-col bg-black font-['Inter','Noto_Sans_CJK_KR',sans-serif] select-none">
      <TopBar />
      <main className="flex flex-1">
        <Inspector />
        <div className="flex min-w-0 flex-1 flex-col">
          <ArrangeWindow />
          <PianoRoll />
        </div>
      </main>
    </div>
  );
}
